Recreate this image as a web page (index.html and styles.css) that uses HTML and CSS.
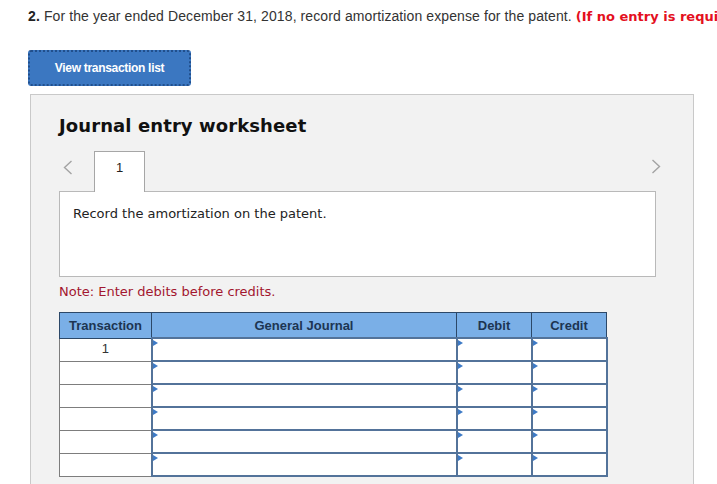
FILE: index.html
```html
<!DOCTYPE html>
<html lang="en">
<head>
    <meta charset="UTF-8">
    <title>Journal entry worksheet</title>
    <link rel="stylesheet" href="styles.css">
</head>
<body>
    <p class="question"><b>2.</b> For the year ended December 31, 2018, record amortization expense for the patent. <span class="hint">(If no entry is required for a transaction/event, select "No journal entry required" in the first account field.)</span></p>

    <button class="list-button">View transaction list</button>

    <div class="panel">
        <h2>Journal entry worksheet</h2>

        <div class="tabs">
            <span class="nav prev">
                <svg width="10" height="15" viewBox="0 0 10 15"><polyline points="8.5,1 1.5,7.5 8.5,14" fill="none" stroke="#a3a3a3" stroke-width="1.4"/></svg>
            </span>
            <span class="tab">1</span>
            <span class="nav next">
                <svg width="10" height="15" viewBox="0 0 10 15"><polyline points="1.5,1 8.5,7.5 1.5,14" fill="none" stroke="#a3a3a3" stroke-width="1.4"/></svg>
            </span>
        </div>
        <div class="tab-body">Record the amortization on the patent.</div>

        <p class="note">Note: Enter debits before credits.</p>

        <table class="journal">
            <colgroup>
                <col class="col-trans">
                <col class="col-account">
                <col class="col-amount">
                <col class="col-amount">
            </colgroup>
            <thead>
                <tr>
                    <th>Transaction</th>
                    <th>General Journal</th>
                    <th>Debit</th>
                    <th>Credit</th>
                </tr>
            </thead>
            <tbody>
                <tr><td class="trans">1</td><td class="entry"></td><td class="entry"></td><td class="entry"></td></tr>
                <tr><td class="trans"></td><td class="entry"></td><td class="entry"></td><td class="entry"></td></tr>
                <tr><td class="trans"></td><td class="entry"></td><td class="entry"></td><td class="entry"></td></tr>
                <tr><td class="trans"></td><td class="entry"></td><td class="entry"></td><td class="entry"></td></tr>
                <tr><td class="trans"></td><td class="entry"></td><td class="entry"></td><td class="entry"></td></tr>
                <tr><td class="trans"></td><td class="entry"></td><td class="entry"></td><td class="entry"></td></tr>
            </tbody>
        </table>
    </div>
</body>
</html>
```

FILE: styles.css
```css
body {
    margin: 0;
    background: #fff;
    font-family: "Liberation Sans", Arial, sans-serif;
    color: #333;
    overflow: hidden;
}
.question {
    margin: 0;
    padding: 7px 0 0 28px;
    font-size: 14px;
    line-height: 19px;
    letter-spacing: 0.1px;
    white-space: nowrap;
}
.question b {
    color: #222;
}
.hint {
    font-family: "DejaVu Sans", Verdana, sans-serif;
    font-size: 13px;
    font-weight: bold;
    letter-spacing: 0;
    color: #e4101e;
}
.list-button {
    display: block;
    margin: 24px 0 0 28px;
    width: 163px;
    height: 36px;
    padding: 0;
    background: #3b77c1;
    border: 2px dotted #214f8c;
    border-radius: 3px;
    color: #fff;
    font-family: "Liberation Sans", Arial, sans-serif;
    font-size: 12px;
    font-weight: bold;
    letter-spacing: -0.3px;
}
.panel {
    margin: 8px 0 0 30px;
    width: 597px;
    padding: 0 37px 20px 28px;
    background: #f2f2f2;
    border: 1px solid #c9c9c9;
    font-family: "DejaVu Sans", Verdana, sans-serif;
}
.panel h2 {
    margin: 0;
    padding-top: 20px;
    font-size: 18px;
    line-height: 22px;
    letter-spacing: 0.1px;
    color: #111;
}
.tabs {
    display: flex;
    align-items: flex-start;
    height: 41px;
    margin-top: 14px;
}
.nav {
    display: flex;
}
.prev {
    width: 35px;
    padding: 9px 0 0 4px;
    box-sizing: border-box;
}
.next {
    margin-left: auto;
    margin-right: -5px;
    padding-top: 8px;
}
.tab {
    width: 51px;
    height: 41px;
    box-sizing: border-box;
    background: #fff;
    border: 1px solid #a6a6a6;
    border-bottom: none;
    text-align: center;
    font-family: "Liberation Sans", Arial, sans-serif;
    font-size: 13px;
    line-height: 32px;
    color: #222;
    position: relative;
    z-index: 1;
}
.tab-body {
    height: 86px;
    margin-top: -1px;
    padding: 14px 13px 0;
    box-sizing: border-box;
    background: #fff;
    border: 1px solid #b9b9b9;
    font-size: 13px;
    line-height: 16px;
    color: #222;
}
.note {
    margin: 7px 0 0;
    font-size: 13px;
    line-height: 16px;
    color: #a3172f;
}
.journal {
    margin-top: 12px;
    width: 547px;
    border-collapse: collapse;
    table-layout: fixed;
    font-family: "Liberation Sans", Arial, sans-serif;
}
.col-trans { width: 92px; }
.col-account { width: 305px; }
.col-amount { width: 75px; }
.journal th {
    height: 24px;
    padding: 0;
    background: #7aafe7;
    border: 1px solid #2c4868;
    color: #1d3552;
    font-size: 13px;
    font-weight: bold;
    text-align: center;
}
.journal td {
    height: 21px;
    padding: 0;
    background: #fff;
}
.journal .trans {
    border: 1px solid #7d7d7d;
    font-size: 13px;
    color: #333;
    text-align: center;
    vertical-align: top;
    line-height: 20px;
}
.journal .entry {
    border: 2px solid #53739a;
    position: relative;
}
.journal .entry::before {
    content: "";
    position: absolute;
    left: 0;
    top: 1px;
    border-left: 5px solid #3d7ac6;
    border-top: 3px solid transparent;
    border-bottom: 3px solid transparent;
}
```
